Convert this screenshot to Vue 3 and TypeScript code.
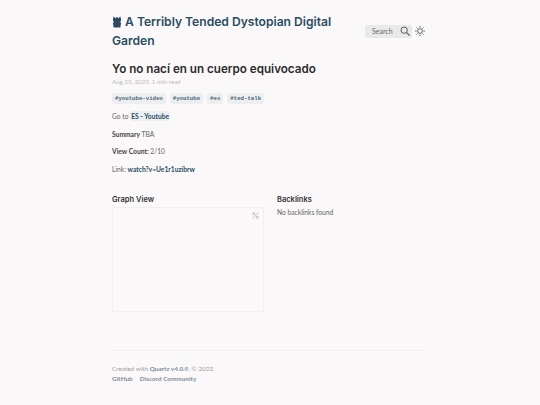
<script setup lang="ts">
const tags = ['#youtube-video', '#youtube', '#es', '#ted-talk']
</script>

<template>
  <div class="page">
    <header class="top">
      <h1 class="site-title">
        <svg class="logo" viewBox="0 0 12 14" width="10" height="12">
          <path d="M2 0l2 2.500L6 1l2 1.500L10 0l1 5-1.500 2.500H11l-1 6H2l-1-6h1.500L1 5z" fill="#284b63" />
        </svg>
        A Terribly Tended Dystopian Digital Garden
      </h1>
      <div class="tools">
        <div class="search">
          <span>Search</span>
          <svg viewBox="0 0 12 12" width="10" height="10">
            <circle cx="5" cy="5" r="3.800" fill="none" stroke="#4e4e4e" stroke-width="1.100" />
            <path d="M8 8l3.500 3.500" stroke="#4e4e4e" stroke-width="1.300" />
          </svg>
        </div>
        <svg class="sun" viewBox="0 0 12 12" width="10" height="10">
          <circle cx="6" cy="6" r="2.800" fill="none" stroke="#4e4e4e" stroke-width="1" />
          <path d="M6 0v2M6 10v2M0 6h2M10 6h2M1.800 1.800l1.400 1.400M8.800 8.800l1.400 1.400M1.800 10.200l1.400-1.400M8.800 3.200l1.400-1.400" stroke="#4e4e4e" stroke-width="1" />
        </svg>
      </div>
    </header>

    <h2 class="title">Yo no nací en un cuerpo equivocado</h2>
    <p class="meta">Aug 25, 2023, 1 min read</p>
    <ul class="tags">
      <li v-for="tag in tags" :key="tag">{{ tag }}</li>
    </ul>

    <p class="line first">Go to <a class="internal">ES - Youtube</a></p>
    <p class="line"><b>Summary</b> TBA</p>
    <p class="line"><b>View Count:</b> 2/10</p>
    <p class="line">Link: <a class="link">watch?v=Ue1r1uzibrw</a></p>

    <section class="bottom">
      <div class="graph">
        <h3>Graph View</h3>
        <div class="graph-box">
          <svg class="expand" viewBox="0 0 10 10" width="9" height="9">
            <path d="M1.500 1.500l7 7M8.500 1.500l-7 7M1 4l3 0 0-3M9 6L6 6l0 3" fill="none" stroke="#c4c4c4" stroke-width="1" />
          </svg>
        </div>
      </div>
      <div class="backlinks">
        <h3>Backlinks</h3>
        <p>No backlinks found</p>
      </div>
    </section>

    <footer class="foot">
      <p>Created with <a>Quartz v4.0.9</a>, © 2023</p>
      <div class="foot-links">
        <a>GitHub</a>
        <a>Discord Community</a>
      </div>
    </footer>
  </div>
</template>

<style>
html,
body {
  margin: 0;
  background: #faf8f8;
}
</style>

<style scoped>
.page {
  width: 313px;
  height: 405px;
  margin-left: 112px;
  font-family: Lato, "Open Sans", sans-serif;
  font-size: 6.700px;
  color: #666;
  overflow: hidden;
}

.top {
  display: flex;
  justify-content: space-between;
  align-items: center;
  padding-top: 12px;
}

.site-title {
  width: 240px;
  margin: 0;
  font-family: Inter, sans-serif;
  font-size: 12.100px;
  line-height: 19px;
  font-weight: 600;
  color: #284b63;
}

.logo {
  vertical-align: -2px;
}

.tools {
  display: flex;
  align-items: center;
  gap: 3px;
}

.search {
  display: flex;
  align-items: center;
  justify-content: space-between;
  width: 38px;
  height: 13px;
  padding: 0 2px 0 7px;
  border-radius: 2px;
  background: #e9e9ea;
  font-size: 7px;
  color: #666;
}

.title {
  margin: 12px 0 0;
  font-family: Inter, sans-serif;
  font-size: 11.650px;
  line-height: 14px;
  font-weight: 600;
  color: #2b2b2b;
}

.meta {
  margin: 0;
  line-height: 11px;
  font-size: 6.200px;
  color: #bbb;
}

.tags {
  display: flex;
  gap: 4px;
  margin: 6px 0 0;
  padding: 0;
  list-style: none;
}

.tags li {
  padding: 1px 3px;
  border-radius: 3px;
  background: #eceeef;
  font-family: "Liberation Mono", monospace;
  font-size: 5.700px;
  line-height: 9px;
  font-weight: 700;
  color: #4a6579;
}

.line {
  margin: 7.500px 0 0;
  line-height: 10px;
}

.line.first {
  margin-top: 7px;
}

.line b {
  color: #444;
}

.internal {
  padding: 1px;
  border-radius: 2px;
  background: #eceeef;
  font-weight: 700;
  color: #284b63;
}

.link {
  font-weight: 700;
  color: #284b63;
}

.bottom {
  display: grid;
  grid-template-columns: 152px 1fr;
  gap: 13px;
  margin-top: 21px;
}

h3 {
  margin: 0;
  font-family: Inter, sans-serif;
  font-size: 7.500px;
  line-height: 10px;
  font-weight: 600;
  color: #333;
}

.graph-box {
  position: relative;
  height: 103px;
  margin-top: 2px;
  border: 1px solid #f0eeee;
  border-radius: 2px;
}

.expand {
  position: absolute;
  top: 3px;
  right: 3px;
}

.backlinks p {
  margin: 2px 0 0;
  line-height: 11px;
}

.foot {
  margin-top: 38px;
  border-top: 1px solid #f1f0f0;
  padding-top: 13px;
  font-size: 6.400px;
  color: #a0a0a0;
  line-height: 10.500px;
}

.foot p {
  margin: 0;
}

.foot a {
  font-weight: 700;
  color: #7c8f9d;
}

.foot-links {
  display: flex;
  gap: 7px;
}
</style>
